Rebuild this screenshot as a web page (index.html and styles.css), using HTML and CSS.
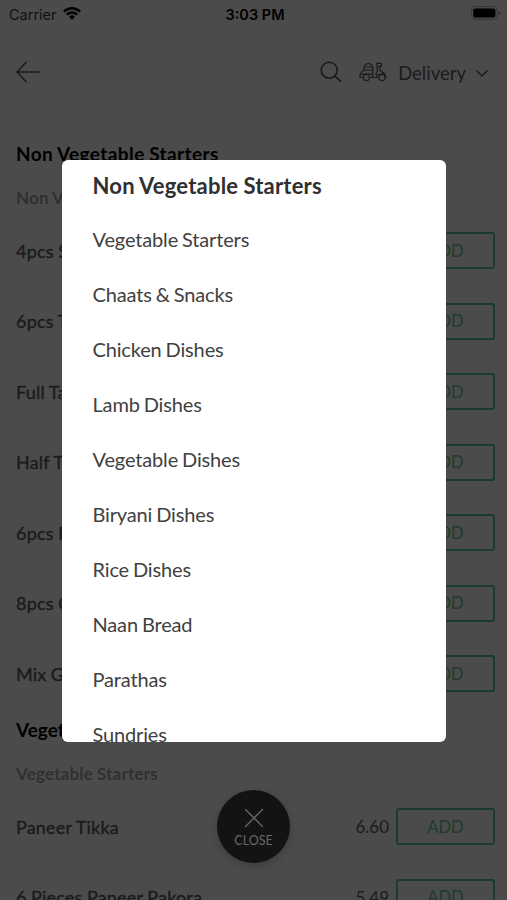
FILE: index.html
```html
<!DOCTYPE html>
<html lang="en">
<head>
<meta charset="utf-8">
<meta name="viewport" content="width=device-width, initial-scale=1">
<title>Menu</title>
<link rel="stylesheet" href="styles.css">
</head>
<body>
<div class="screen">
  <div class="status">
    <div class="carrier"><span>Carrier</span>
      <svg width="18" height="14" viewBox="0 0 18 14"><path d="M0 4.8A12.6 12.6 0 0 1 18 4.8L16.2 6.6A10.2 10.2 0 0 0 1.8 6.6Z M3 7.7A8.5 8.5 0 0 1 15 7.7L13.2 9.5A6 6 0 0 0 4.8 9.5Z M6 10.7A4.3 4.3 0 0 1 12 10.7L9 13.7Z" fill="#000"/></svg>
    </div>
    <span class="time">3:03 PM</span>
    <svg class="battery" width="30" height="14" viewBox="0 0 30 14"><rect x=".6" y=".6" width="25.6" height="12.8" rx="4" fill="none" stroke="#353535"/><rect x="2.2" y="2.4" width="22.2" height="9" rx="2" fill="#000"/><path d="M27.8 5v4q1.5-.5 1.5-2t-1.5-2" fill="#292929"/></svg>
  </div>
  <header class="nav">
    <svg width="26" height="22" viewBox="0 0 26 22" fill="none" stroke="#1b1b1b" stroke-width="1.5" stroke-linecap="round" stroke-linejoin="round"><path d="M24.3 11H1.9M11.2 1.2 1.9 11l9.3 9.8"/></svg>
    <div class="tools">
      <svg class="search" width="22" height="22" viewBox="0 0 22 22" fill="none" stroke="#1b1b1b" stroke-width="1.6" stroke-linecap="round"><circle cx="9.2" cy="9.2" r="8"/><path d="m15 15 5.5 5.3"/></svg>
      <svg class="scooter" width="28" height="20" viewBox="0 0 28 20" fill="none" stroke="#1b1b1b" stroke-width="1.2" stroke-linecap="round" stroke-linejoin="round"><path d="M5 8V6a4.4 4.4 0 0 1 8.8 0v6M5.2 5h8M5 8h8.8M5 8Q.8 11 .8 15.5h3.4M3.2 12.2h10.6v3.3M10.5 15.5h8.2M18.8 15.5Q15.5 12 18.5 9L17.7 1.3h4.6v3.2h-3.4M21 4.5v4l4.3 3q1.6 1.4 1.5 4M18.2 13l7-1.8"/><circle cx="7.4" cy="15.6" r="3.1"/><circle cx="23" cy="15.6" r="3.1"/></svg>
      <span class="mode">Delivery</span>
      <svg class="chevron" width="14" height="9" viewBox="0 0 14 9" fill="none" stroke="#1b1b1b" stroke-width="1.5" stroke-linecap="round" stroke-linejoin="round"><path d="m1.7 1.7 5.3 5.3 5.3-5.3"/></svg>
    </div>
  </header>
  <main>
    <section>
      <h2>Non Vegetable Starters</h2>
      <h3>Non V</h3>
      <div class="row"><span class="dish">4pcs S</span><button>ADD</button></div>
      <div class="row"><span class="dish">6pcs T</span><button>ADD</button></div>
      <div class="row"><span class="dish">Full Ta</span><button>ADD</button></div>
      <div class="row"><span class="dish">Half T</span><button>ADD</button></div>
      <div class="row"><span class="dish">6pcs F</span><button>ADD</button></div>
      <div class="row"><span class="dish">8pcs C</span><button>ADD</button></div>
      <div class="row"><span class="dish">Mix G</span><button>ADD</button></div>
    </section>
    <section>
      <h2>Veget</h2>
      <h3>Vegetable Starters</h3>
      <div class="row"><span class="dish">Paneer Tikka</span><span class="price">6.60</span><button>ADD</button></div>
      <div class="row"><span class="dish">6 Pieces Paneer Pakora</span><span class="price">5.49</span><button>ADD</button></div>
    </section>
  </main>
  <nav class="modal">
    <a class="active">Non Vegetable Starters</a>
    <a>Vegetable Starters</a>
    <a>Chaats &amp; Snacks</a>
    <a>Chicken Dishes</a>
    <a>Lamb Dishes</a>
    <a>Vegetable Dishes</a>
    <a>Biryani Dishes</a>
    <a>Rice Dishes</a>
    <a>Naan Bread</a>
    <a>Parathas</a>
    <a>Sundries</a>
  </nav>
  <div class="close">
    <svg width="20" height="20" viewBox="0 0 20 20" stroke="#686868" stroke-width="1.3" stroke-linecap="round"><path d="m1.5 1.5 17 17m0-17-17 17"/></svg>
    <span>CLOSE</span>
  </div>
</div>
</body>
</html>
```
FILE: styles.css
```css
* { box-sizing: border-box; }
body { margin: 0; font-family: Lato, "Liberation Sans", sans-serif; }
.screen { position: relative; width: 507px; height: 900px; overflow: hidden; background: #4b4b4b; color: #1b1b1b; }
.status { display: grid; grid-template-columns: 1fr auto 1fr; align-items: center; height: 28px; padding: 0 6px 0 9px; font-family: Inter, sans-serif; font-size: 14.5px; }
.carrier { display: flex; align-items: center; gap: 6px; color: #111; }
.carrier svg { margin-top: -2px; }
.time { font-weight: 600; color: #000; }
.battery { justify-self: end; margin-top: -2px; }
.nav { display: flex; align-items: center; justify-content: space-between; height: 88px; padding: 0 18px 0 15px; }
.tools { display: flex; align-items: center; }
.scooter { margin-left: 17px; }
.mode { margin-left: 11px; padding-top: 1px; font-size: 18.5px; line-height: 24px; }
.chevron { margin-left: 9px; margin-top: 2px; }
main { padding: 24px 12px 0 16px; }
h2 { margin: 0; height: 28px; line-height: 28px; font-size: 19px; font-weight: 700; letter-spacing: .4px; word-spacing: -.5px; color: #000; }
h3 { margin: 0; height: 47.5px; padding-top: 18px; line-height: 24px; font-size: 17px; font-weight: 700; letter-spacing: .2px; word-spacing: -.5px; color: #303030; }
section + section h2 { margin-top: 7px; letter-spacing: 0; }
.row { display: flex; align-items: center; height: 70.5px; font-size: 18px; }
.dish { flex: 1; letter-spacing: .2px; word-spacing: -.4px; -webkit-text-stroke: .4px #1b1b1b; white-space: nowrap; }
.price { margin-right: 7px; font-size: 17px; }
button { width: 99px; height: 37px; padding: 0; border: 2px solid #1d3b2c; border-radius: 3px; background: none; color: #1d3b2c; font: 16.5px Lato, sans-serif; }
.modal { position: absolute; left: 62px; top: 159.5px; width: 384px; height: 582px; padding-left: 30.5px; overflow: hidden; border-radius: 6px; background: #fff; color: #414141; font-size: 20px; letter-spacing: -.15px; word-spacing: -1px; }
.modal a { display: block; height: 55px; line-height: 52px; white-space: nowrap; }
.modal .active { height: 53px; line-height: 52px; font-size: 22px; font-weight: 700; letter-spacing: .2px; word-spacing: -.4px; color: #303030; }
.close { position: absolute; left: 217px; top: 790px; width: 73px; height: 73px; display: flex; flex-direction: column; align-items: center; padding-top: 18px; gap: 5px; border-radius: 50%; background: #131313; box-shadow: 0 3px 8px rgba(0,0,0,.2); color: #686868; font-size: 12.5px; line-height: 16px; }
```
